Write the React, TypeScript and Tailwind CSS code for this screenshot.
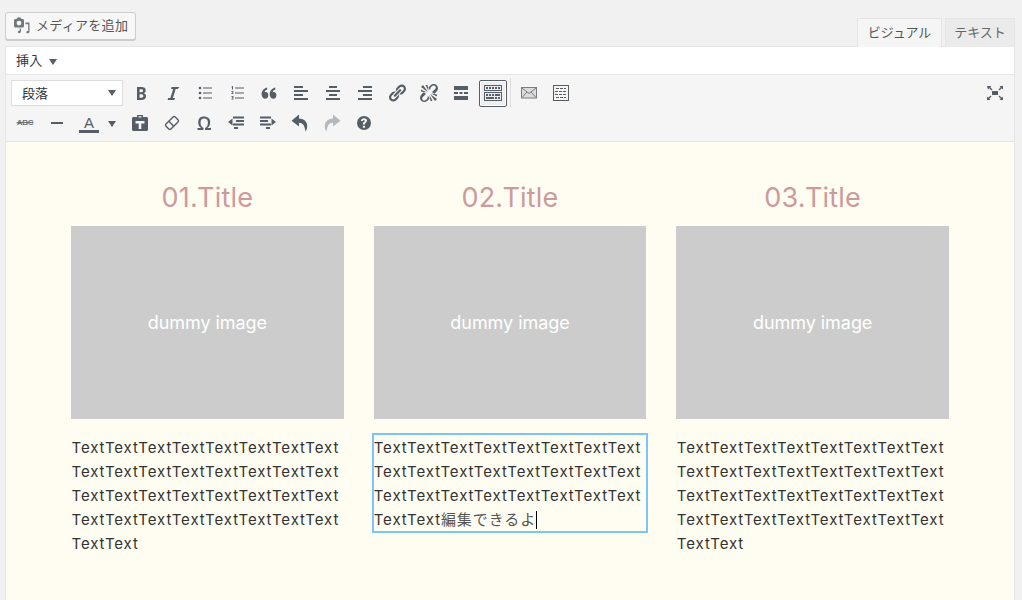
import React from "react";

const Ico = ({ d, size = 20, children }: { d?: string; size?: number; children?: React.ReactNode }) => (
  <svg width={size} height={size} viewBox="0 0 20 20" fill="currentColor" fillRule="evenodd">
    {d && <path d={d} />}
    {children}
  </svg>
);

const Btn = ({ children, w = "w-[32px]" }: { children: React.ReactNode; w?: string }) => (
  <div className={`${w} h-[30px] flex items-center justify-center shrink-0`}>{children}</div>
);

const Bold = () => <Ico d="M6 4v13h4.54c1.37 0 2.46-.33 3.26-1 .8-.66 1.2-1.58 1.2-2.77 0-.84-.17-1.51-.51-2.01s-.9-.85-1.67-1.03v-.09c.57-.1 1.02-.4 1.36-.9s.51-1.13.51-1.91c0-1.14-.39-1.98-1.17-2.5C12.75 4.26 11.5 4 9.78 4H6zm2.57 5.15V6.26h1.36c.73 0 1.27.11 1.61.32.34.22.51.58.51 1.07 0 .54-.16.92-.47 1.15s-.82.35-1.51.35h-1.5zm0 2.19h1.6c1.44 0 2.16.53 2.16 1.61 0 .6-.17 1.05-.51 1.34s-.86.43-1.57.43H8.57v-3.38z" />;
const Italic = () => <Ico d="M14.78 6h-2.13l-2.8 9h2.12l-.62 2H4.6l.62-2h2.14l2.8-9H8.03l.62-2h7.75z" />;
const Ul = () => (
  <Ico>
    <circle cx="5" cy="5" r="1.300" />
    <circle cx="5" cy="10" r="1.300" />
    <circle cx="5" cy="15" r="1.300" />
    <rect x="8" y="4.500" width="9" height="1" />
    <rect x="8" y="9.500" width="9" height="1" />
    <rect x="8" y="14.500" width="9" height="1" />
  </Ico>
);
const Ol = () => (
  <Ico>
    <path d="M6 3v3.400H5V4.200l-.6.2v-.7L5.400 3z" />
    <path d="M4.400 8h2v1L5.300 10.200h1.200v.7H4.400v-.7L5.500 9V8.700H4.400z" />
    <path d="M4.400 13h2v3.400h-2v-.7h1.100v-.7h-.8v-.6h.8v-.7H4.400z" />
    <rect x="8" y="4.500" width="9" height="1" />
    <rect x="8" y="9.500" width="9" height="1" />
    <rect x="8" y="14.500" width="9" height="1" />
  </Ico>
);
const Quote = () => (
  <Ico d="M9.300 12c0 2-1.100 3.800-3 3.800-2 0-3.700-1.900-3.700-4.600 0-3.200 2.400-6 5.600-6.700v2c-1.500.5-2.500 1.500-2.700 2.800.3-.1.600-.2 1-.2 1.700 0 2.800 1.200 2.800 2.900zM17.400 12c0 2-1.100 3.800-3 3.800-2 0-3.700-1.900-3.700-4.600 0-3.200 2.400-6 5.600-6.700v2c-1.500.5-2.500 1.500-2.700 2.800.3-.1.600-.2 1-.2 1.700 0 2.800 1.200 2.800 2.900z" />
);
const AL = () => <Ico d="M12 5V3H3v2h9zm5 4V7H3v2h14zm-5 4v-2H3v2h9zm5 4v-2H3v2h14z" />;
const AC = () => <Ico d="M14 5V3H6v2h8zm3 4V7H3v2h14zm-3 4v-2H6v2h8zm3 4v-2H3v2h14z" />;
const AR = () => <Ico d="M17 5V3H8v2h9zm0 4V7H3v2h14zm0 4v-2H8v2h9zm0 4v-2H3v2h14z" />;
const Link = () => (
  <Ico d="M17.74 2.76c1.68 1.69 1.68 4.41 0 6.1l-1.53 1.52c-1.12 1.12-2.7 1.47-4.14 1.09l2.62-2.61.76-.77.76-.76c.84-.84.84-2.2 0-3.04-.84-.85-2.2-.85-3.04 0l-.77.76-3.38 3.38c-.37-1.44-.02-3.02 1.1-4.14l1.52-1.53c1.69-1.68 4.42-1.68 6.1 0zM8.59 13.43l5.34-5.34c.42-.42.42-1.1 0-1.52-.44-.43-1.13-.39-1.53 0l-5.33 5.34c-.42.42-.42 1.1 0 1.52.44.43 1.13.39 1.52 0zm-.76 2.29l4.14-4.15c.38 1.44.03 3.02-1.09 4.14l-1.52 1.53c-1.69 1.68-4.41 1.68-6.1 0-1.68-1.68-1.68-4.42 0-6.1l1.53-1.52c1.12-1.12 2.7-1.47 4.14-1.1l-4.14 4.15c-.85.84-.85 2.2 0 3.05.84.84 2.2.84 3.04 0z" />
);
const Unlink = () => (
  <Ico>
    <path d="M17.74 2.26c1.68 1.69 1.68 4.41 0 6.1l-1.53 1.52c-.32.33-.69.58-1.08.77L13 9l1.69-1.4.76-.77.76-.76c.84-.84.84-2.2 0-3.04-.84-.85-2.2-.85-3.04 0l-.77.76-.76.76L11 7 9.35 4.86c.19-.38.44-.75.77-1.07l1.52-1.53c1.69-1.68 4.42-1.68 6.1 0z" />
    <path d="M2.26 17.740c-1.68-1.690-1.68-4.410 0-6.100l1.53-1.520c.32-.33.69-.58 1.08-.77L7 11l-1.69 1.400-.76.77-.76.76c-.84.84-.84 2.2 0 3.040.84.85 2.2.85 3.040 0l.77-.76.76-.76L9 13l1.650 2.140c-.19.38-.44.75-.77 1.070l-1.520 1.530c-1.690 1.680-4.420 1.680-6.100 0z" />
    <path d="M2 4l7 5-5-7zM6.500 2l3 6-1-6zM2 6.500l6 3-6-1zM18 16l-7-5 5 7zM13.500 18l-3-6 1 6zM18 13.500l-6-3 6 1z" />
  </Ico>
);
const More = () => <Ico d="M3 3h14v4H3zM3 9h4v2H3zM8.500 9h3v2h-3zM13 9h4v2h-4zM3 13h14v4H3z" />;
const Kitchen = () => (
  <Ico d="M19 2v6H1V2h18zm-1 5V3H2v4h16zM5 4v2H3V4h2zm3 0v2H6V4h2zm3 0v2H9V4h2zm3 0v2h-2V4h2zm3 0v2h-2V4h2zm2 5v9H1V9h18zm-1 8v-7H2v7h16zM5 11v2H3v-2h2zm3 0v2H6v-2h2zm3 0v2H9v-2h2zm6 0v2h-5v-2h5zm-6 3v2H3v-2h8zm3 0v2h-2v-2h2zm3 0v2h-2v-2h2z" />
);
const Mail = () => (
  <svg width="16" height="12" viewBox="0 0 16 12" fill="none">
    <rect x="0.500" y="0.500" width="15" height="10.500" fill="#dcdcdc" stroke="#787e84" />
    <path d="M1 1l7 5.500L15 1M1 10.500l5-5.500M15 10.500l-5-5.500" stroke="#787e84" />
  </svg>
);
const TableIco = () => (
  <svg width="16" height="16" viewBox="0 0 16 16" fill="none" stroke="#555d66" shapeRendering="crispEdges">
    <rect x="0.500" y="0.500" width="15" height="15" strokeWidth="1" />
    <path d="M3 3.500h10M2 6.500h12M2 9.500h12M3 12.500h10" strokeDasharray="3 1" />
  </svg>
);
const Full = () => (
  <Ico>
    <rect x="7" y="8" width="6" height="4" />
    <path d="M2 3h4.500L5.200 4.300 7.500 6.500 6.500 7.500 4.300 5.200 3 6.500zM18 3v3.500L16.700 5.200 14.500 7.500 13.500 6.500 15.700 4.300 14.500 3zM2 17v-3.500l1.300 1.300 2.200-2.300 1 1-2.200 2.200L5.500 17zM18 17h-3.500l1.300-1.300-2.300-2.200 1-1 2.200 2.200 1.300-1.300z" />
  </Ico>
);
const Hr = () => <Ico d="M4 9h12v2H4z" />;
const Paste = () => (
  <Ico d="M7 2h6v2h3.500C17.300 4 18 4.700 18 5.500v11c0 .8-.7 1.500-1.500 1.500h-13C2.700 18 2 17.300 2 16.500v-11C2 4.700 2.700 4 3.500 4H7zM8.500 3.200v1.300h3V3.200zM5.500 8v2.600h3.200V16h2.600v-5.400h3.200V8z" />
);
const Eraser = () => (
  <Ico>
    <g transform="rotate(-45 10 10)" fill="none" stroke="currentColor" strokeWidth="1.400">
      <rect x="3.500" y="6.500" width="13" height="7" rx="1.500" />
      <path d="M9 6.500v7" />
    </g>
  </Ico>
);
const Omega = () => (
  <Ico d="M10 5.400c1.270 0 2.240.36 2.910 1.080.66.71 1 1.760 1 3.130 0 1.280-.23 2.370-.69 3.270-.47.89-1.170 1.520-2.220 2.120v2h6v-2h-3.690c.92-.64 1.620-1.340 2.120-2.340.49-1.010.74-2.130.74-3.350 0-1.780-.55-3.190-1.650-4.220S11.690 3.470 9.860 3.470c-1.810 0-3.200.52-4.180 1.550-.97 1.040-1.460 2.530-1.460 4.480 0 1.210.24 2.280.73 3.210.49.92 1.240 1.710 2.260 2.290H3.500v2h6v-2c-1.050-.6-1.820-1.250-2.300-2.200-.47-.9-.7-1.970-.7-3.200 0-1.400.3-2.490.95-3.200.66-.72 1.520-1 2.550-1z" />
);
const Outdent = () => <Ico d="M7 3.500h11v2H7zM10 7h8v2h-8zM7 10.500h11v2H7zM8 14h4v2H8zM2 9l4.500-3.500v7z" />;
const Indent = () => <Ico d="M2 3.500h11v2H2zM2 7h8v2H2zM2 10.500h11v2H2zM8 14h4v2H8zM18 9l-4.500-3.500v7z" />;
const Undo = () => <Ico d="M9 1.500 L1.500 7.800 L9 13.500 V9.800 C13 9.800 14.500 12.500 15.500 18.500 C18.800 14.500 18 5.800 9 5.500 Z" />;
const Redo = () => <Ico d="M11 1.500 L18.500 7.800 L11 13.500 V9.800 C7 9.800 5.500 12.500 4.500 18.500 C1.200 14.500 2 5.800 11 5.500 Z" />;
const Help = () => (
  <Ico>
    <path d="M10 3a7 7 0 1 1 0 14a7 7 0 0 1 0-14zM8.800 12.800v1.900h2.300v-1.900zM10 5.300c-1.800 0-3 .9-3.100 2.700h2c.1-.7.4-1 1-1 .5 0 .9.300.9.800 0 .4-.3.700-.8 1.100-.9.700-1.200 1.200-1.200 2.500v.2h2v-.2c0-.7.200-1 .8-1.500.8-.6 1.400-1.200 1.400-2.300 0-1.500-1.200-2.300-3-2.300z" />
  </Ico>
);
const MediaIco = () => (
  <svg width="18" height="18" viewBox="0 0 18 18" fill="#72777c">
    <path
      fillRule="evenodd"
      d="M2.500 2h1l1-1.500h3l1 1.500h1C10.300 2 11 2.700 11 3.500V9c0 .8-.7 1.500-1.500 1.500h-7C1.700 10.500 1 9.800 1 9V3.500C1 2.700 1.700 2 2.500 2zM6 3.700a2.400 2.400 0 1 0 0 4.800a2.400 2.400 0 0 0 0-4.800z"
    />
    <path d="M12.500 5.500h4v9c0 1.100-.8 1.800-1.800 1.800-.8 0-1.400-.5-1.400-1.100 0-.8.800-1.300 1.600-1.300h.3V7.200h-2.700zM6.500 11.500h1.500v2.800c0 1.100-.8 1.900-1.800 1.900-.8 0-1.400-.5-1.400-1.200 0-.8.700-1.300 1.500-1.300h.7z" />
  </svg>
);
const Caret = () => (
  <span className="block w-0 h-0 border-x-[4px] border-x-transparent border-t-[6px] border-t-[#555d66]" />
);

const LINE = "TextTextTextTextTextTextTextText";

const Column = ({ title, children, active }: { title: string; children: React.ReactNode; active?: boolean }) => (
  <div className="flex flex-col font-['Inter','Noto_Sans_CJK_JP',sans-serif]">
    <h2 className="text-center text-[27px] leading-[32px] font-normal text-[#cc9a9a] tracking-[0.2px]">{title}</h2>
    <div className="mt-[12px] h-[193px] bg-[#cccccc] flex items-center justify-center text-white text-[18px] tracking-[-0.05px]">
      dummy image
    </div>
    <div
      className={`mt-[16px] text-[15px] leading-[24px] text-[#333] tracking-[0.9px] whitespace-nowrap ${
        active ? "outline-2 outline-[#7cc5f8]" : "pl-[0.5px]"
      }`}
    >
      <div className="translate-y-px">{children}</div>
    </div>
  </div>
);

export default function App() {
  return (
    <div className="h-[600px] overflow-hidden bg-[#f1f1f1] pl-[5px] pr-[7px] flex flex-col font-['Liberation_Sans','Noto_Sans_CJK_JP',sans-serif] text-[#32373c]">
      <div className="h-[46px] flex justify-between items-end shrink-0">
        <div className="mb-[6px] h-[28px] w-[131px] flex items-center gap-[5px] pl-[7px] bg-[#f7f7f7] border border-[#cccccc] rounded-[3px] shadow-[0_1px_0_#cccccc] text-[13px] tracking-[0.3px] text-[#555]">
          <MediaIco />
          <span>メディアを追加</span>
        </div>
        <div className="flex gap-[3px] text-[13px] items-end -mb-px relative">
          <div className="w-[85px] h-[29px] flex items-center justify-center bg-[#f5f5f5] border border-[#e5e5e5] border-b-0 text-[#555]">
            ビジュアル
          </div>
          <div className="w-[70px] h-[29px] flex items-center justify-center bg-[#ebebeb] border border-[#e5e5e5] border-b-0 text-[#666]">
            テキスト
          </div>
        </div>
      </div>

      <div className="flex-1 flex flex-col border-x border-t border-[#e5e5e5] min-h-0">
        <div className="h-[28px] bg-white flex items-center pl-[10px] gap-[6px] text-[13px] tracking-[0.3px] text-[#32373c] shrink-0 border-b border-[#e5e5e5]">
          <span>挿入</span>
          <span className="pt-[2px]"><Caret /></span>
        </div>

        <div className="h-[67px] bg-[#f5f5f5] border-b border-[#e5e5e5] shrink-0 flex justify-between pt-[3px] text-[#555d66]">
          <div className="flex flex-col pl-[3px]">
            <div className="h-[30px] flex items-center">
              <div className="ml-[2px] mr-[2px] w-[112px] h-[26px] bg-white border border-[#dddddd] flex items-center justify-between pl-[10px] pr-[6px] text-[13px] text-[#333]">
                <span className="pt-px">段落</span>
                <Caret />
              </div>
              <Btn><Bold /></Btn>
              <Btn><Italic /></Btn>
              <Btn><Ul /></Btn>
              <Btn><Ol /></Btn>
              <Btn><Quote /></Btn>
              <Btn><AL /></Btn>
              <Btn><AC /></Btn>
              <Btn><AR /></Btn>
              <Btn><Link /></Btn>
              <Btn><Unlink /></Btn>
              <Btn><More /></Btn>
              <Btn>
                <div className="w-[28px] h-[27px] border border-[#555d66] rounded-[2px] bg-[#eeeeee] flex items-center justify-center shadow-[inset_0_0_0_1px_#fff]">
                  <Kitchen />
                </div>
              </Btn>
              <div className="w-px h-[30px] bg-[#dddddd] ml-[1px] mr-[10px]" />
              <div className="w-[32px] flex items-center"><Mail /></div>
              <div className="w-[32px] flex items-center"><TableIco /></div>
            </div>
            <div className="h-[30px] flex items-center">
              <Btn>
                <span className="text-[8px] font-bold line-through tracking-[-0.2px] text-[#6b7278]">ABC</span>
              </Btn>
              <Btn><Hr /></Btn>
              <Btn>
                <span className="flex flex-col items-center w-[20px] pt-[2px]">
                  <span className="text-[15px] leading-[15px] text-[#555d66]">A</span>
                  <span className="block w-[20px] h-[2.500px] bg-[#555d66]" />
                </span>
              </Btn>
              <div className="w-[19px] flex pl-[3px] pt-[1px]"><Caret /></div>
              <Btn><Paste /></Btn>
              <Btn><Eraser /></Btn>
              <Btn><Omega /></Btn>
              <Btn><Outdent /></Btn>
              <Btn><Indent /></Btn>
              <Btn><Undo /></Btn>
              <Btn><span className="text-[#b4b9be]"><Redo /></span></Btn>
              <Btn><Help /></Btn>
            </div>
          </div>
          <div className="pr-[3px] h-[30px] flex items-center"><Btn><Full /></Btn></div>
        </div>

        <div className="flex-1 bg-[#fffdf2] px-[65px] pt-[40px]">
          <div className="grid grid-cols-3 gap-[30px]">
            <Column title="01.Title">
              <div>{LINE}</div><div>{LINE}</div><div>{LINE}</div><div>{LINE}</div><div>TextText</div>
            </Column>
            <Column title="02.Title" active>
              <div>{LINE}</div><div>{LINE}</div><div>{LINE}</div>
              <div className="flex items-center">TextText<span className="text-[#555]">編集できるよ</span><span className="inline-block w-px h-[18px] bg-black" /></div>
            </Column>
            <Column title="03.Title">
              <div>{LINE}</div><div>{LINE}</div><div>{LINE}</div><div>{LINE}</div><div>TextText</div>
            </Column>
          </div>
        </div>
      </div>
    </div>
  );
}
